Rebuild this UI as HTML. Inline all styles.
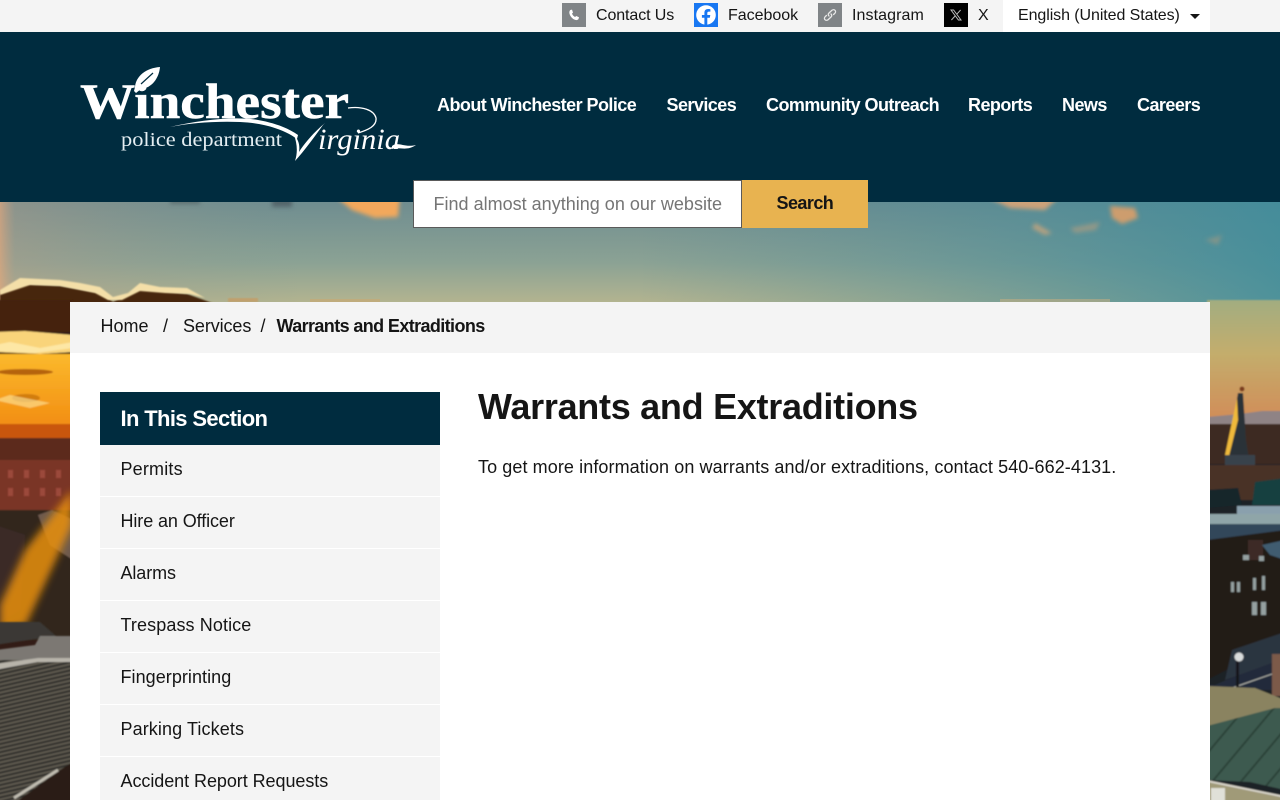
<!DOCTYPE html>
<html lang="en"><head><meta charset="utf-8"><title>Warrants and Extraditions</title>
<style>
*{box-sizing:border-box}
html,body{margin:0;padding:0;width:1280px;height:800px;overflow:hidden;background:#fff;font-family:"Liberation Sans",Arial,sans-serif;color:#151515}
a{color:inherit;text-decoration:none}
.t{position:absolute;white-space:nowrap;line-height:1}
#top{position:absolute;left:0;top:0;width:1280px;height:32px;background:#f4f4f4}
.ic{position:absolute;top:3px;width:24px;height:24px;display:block}
#lang{position:absolute;left:1003px;top:0;width:207px;height:32px;background:#fff}
#hdr{position:absolute;left:0;top:32px;width:1280px;height:170px;background:#002c3f}
#bg{position:absolute;left:0;top:202px}
.nav{font-weight:bold;font-size:18px;color:#fff;top:96px;letter-spacing:-.55px}
#inp{position:absolute;left:413px;top:180px;width:329px;height:48px;background:#fff;border:1px solid #5a5a5a}
#btn{position:absolute;left:742px;top:180px;width:126px;height:48px;background:#e8b350}
#main{position:absolute;left:70px;top:302px;width:1140px;height:498px;background:#fff}
#crumb{position:absolute;left:70px;top:302px;width:1140px;height:51px;background:#f4f4f4}
#shead{position:absolute;left:100px;top:392px;width:340px;height:53px;background:#002c3f}
.li{position:absolute;left:100px;width:340px;height:51px;background:#f4f4f4}
.tb{top:8px;font-size:16px}
.m{font-size:18px;left:120.5px}
</style></head><body>

<svg id="bg" width="1280" height="598" viewBox="0 202 1280 598" xmlns="http://www.w3.org/2000/svg">
<defs>
<linearGradient id="sky" x1="0" y1="0" x2="0" y2="1"><stop offset="0" stop-color="#6f8d90"/><stop offset=".55" stop-color="#8ba294"/><stop offset="1" stop-color="#bcb88f"/></linearGradient>
<linearGradient id="skyR" x1="0" y1="0" x2="1" y2="0"><stop offset="0" stop-color="#4f8a96" stop-opacity="0"/><stop offset="1" stop-color="#3d8c9c" stop-opacity=".85"/></linearGradient>
<linearGradient id="skyL" x1="0" y1="0" x2="1" y2="0"><stop offset="0" stop-color="#e0a67c" stop-opacity=".75"/><stop offset=".05" stop-color="#b59c86" stop-opacity=".4"/><stop offset="1" stop-color="#8a9a8f" stop-opacity="0"/></linearGradient>
<linearGradient id="rs" x1="0" y1="0" x2="0" y2="1"><stop offset="0" stop-color="#a2ad80"/><stop offset=".45" stop-color="#c3ad6c"/><stop offset="1" stop-color="#d18d58"/></linearGradient>
<linearGradient id="ls" x1="0" y1="0" x2="0" y2="1"><stop offset="0" stop-color="#fbb92c"/><stop offset="1" stop-color="#f28d12"/></linearGradient>
<pattern id="roof" width="4" height="4" patternUnits="userSpaceOnUse" patternTransform="rotate(-13)"><rect width="4" height="4" fill="#5f5a50"/><rect width="4" height="2" fill="#2f2d2a"/></pattern>
<pattern id="roofG" width="22" height="22" patternUnits="userSpaceOnUse" patternTransform="rotate(40)"><rect width="22" height="22" fill="#3d5a4f"/><rect width="2" height="22" fill="#2b4239"/></pattern>
<filter id="b0" x="-10%" y="-10%" width="120%" height="120%"><feGaussianBlur stdDeviation=".8"/></filter>
<filter id="b1" x="-20%" y="-50%" width="140%" height="200%"><feGaussianBlur stdDeviation="2"/></filter>
<filter id="b3" x="-50%" y="-50%" width="200%" height="200%"><feGaussianBlur stdDeviation="4"/></filter>
</defs>
<rect x="0" y="202" width="1280" height="110" fill="url(#sky)"/>
<rect x="640" y="202" width="640" height="110" fill="url(#skyR)"/>
<rect x="0" y="202" width="300" height="110" fill="url(#skyL)"/>
<g filter="url(#b1)">
<path d="M335 196 L400 196 L398 217 L375 218 L352 210Z" fill="#f2a85c"/>
<path d="M985 196 L1060 196 L1045 210 L1010 208Z" fill="#e8a873" opacity=".8"/>
<path d="M1110 206 L1135 208 L1138 218 L1122 224 L1112 218Z" fill="#e3a066" opacity=".85"/>
<path d="M1035 223 L1052 233 L1045 235 L1032 228Z" fill="#dca878" opacity=".7"/>
<path d="M1070 228 L1100 222 L1096 230 L1075 233Z" fill="#c8a07a" opacity=".5"/>
<path d="M1205 240 L1222 235 L1218 245Z" fill="#b09a7c" opacity=".5"/>
<rect x="170" y="196" width="30" height="8" fill="#4c5a5e" opacity=".6"/>
<rect x="272" y="196" width="20" height="11" fill="#4e5c62" opacity=".8"/>
</g>
<!-- left horizon cloud band -->
<path d="M0 294 L20 284 L60 286 L100 293 L113 302 L140 289 L187 294 L215 304 L0 320Z" fill="#47280f" filter="url(#b0)"/>
<path d="M0 290 L20 278 L40 279 L60 280 L80 283 L100 287 L113 297 L128 293 L140 283 L160 287 L187 288 L205 298 L190 294 L165 293 L140 291 L122 300 L108 300 L95 293 L60 286 L30 285 L0 295Z" fill="#f4dfa8" filter="url(#b0)"/>
<rect x="228" y="298" width="30" height="4" fill="#c89a5e" opacity=".7" filter="url(#b0)"/>
<rect x="310" y="299" width="70" height="3" fill="#caa672" opacity=".6"/>
<rect x="1000" y="299" width="110" height="3" fill="#ccb07f" opacity=".5"/>
<!-- left strip -->
<g filter="url(#b0)">
<rect x="-5" y="302" width="78" height="498" fill="#321d12"/>
<rect x="-5" y="300" width="78" height="32" fill="#44240f"/>
<rect x="-5" y="354" width="78" height="72" fill="url(#ls)"/>
<path d="M-5 332 L25 331 L73 335 L73 352 L40 354 L-5 352Z" fill="#f9d47a"/>
<path d="M-5 345 L10 342 L40 348 L73 342 L73 348 L35 353 L-5 351Z" fill="#fff0b8" opacity=".7"/>
<ellipse cx="25" cy="372" rx="28" ry="3" fill="#b5630c"/>
<ellipse cx="26" cy="398" rx="14" ry="4" fill="#d27d10"/>
<path d="M-5 400 L30 408 L50 403 L10 395Z" fill="#fde7a0" opacity=".6"/>
<rect x="-5" y="424" width="78" height="14" fill="#c9560f"/>
<rect x="-5" y="438" width="78" height="22" fill="#5c2a1b"/>
<rect x="-5" y="460" width="78" height="50" fill="#7a3528"/>
<g fill="#a45040" opacity=".8"><rect x="8" y="470" width="5" height="8"/><rect x="24" y="470" width="5" height="8"/><rect x="40" y="470" width="5" height="8"/><rect x="56" y="470" width="5" height="8"/><rect x="8" y="488" width="5" height="8"/><rect x="24" y="488" width="5" height="8"/><rect x="40" y="488" width="5" height="8"/><rect x="56" y="488" width="5" height="8"/></g>
<rect x="-5" y="510" width="78" height="130" fill="#33251f"/>
<path d="M38 515 L52 510 L73 520 L73 560 L50 545 Z" fill="#6e5a4e"/>
<path d="M-5 525 L25 535 L20 610 L-5 625Z" fill="#3a2c26"/>
</g>
<path d="M72 490 L72 525 L26 625 L0 632 L0 605 L25 550Z" fill="#e8900f" opacity=".85" filter="url(#b3)"/>
<g filter="url(#b0)">
<path d="M-5 622 L40 622 L56 636 L-5 645Z" fill="#3a3934"/>
<path d="M-5 650 L35 645 L40 636 L73 636 L73 658 L-5 668Z" fill="#7b7873"/>
<rect x="-5" y="660" width="78" height="145" fill="url(#roof)"/>
<path d="M-5 664 L38 658 L73 658 L73 662 L38 662 L-5 670Z" fill="#b8b4aa"/>
<path d="M12 805 L60 770 L73 762 L73 805Z" fill="#2a1f18"/>
<path d="M14 798 L58 770" stroke="#c0bcb0" stroke-width="3" fill="none"/>
</g>
<!-- right strip -->
<g filter="url(#b0)">
<rect x="1207" y="302" width="78" height="503" fill="#1e2226"/>
<rect x="1207" y="300" width="78" height="118" fill="url(#rs)"/>
<path d="M1207 417 L1240 414 L1262 411 L1285 411 L1285 425 L1207 425Z" fill="#8f8385"/>
<rect x="1207" y="424" width="78" height="40" fill="#3e2b22"/>
<path d="M1226 460 L1238 393 L1243 393 L1246 440 L1250 465Z" fill="#2a3038"/>
<path d="M1225 455 L1237 398 L1238 420 L1229 456Z" fill="#efb93a"/>
<circle cx="1242" cy="389" r="2.5" fill="#7a3a1a"/>
<rect x="1225" y="455" width="30" height="12" fill="#39434c"/>
<rect x="1207" y="465" width="78" height="35" fill="#4a3026"/>
<path d="M1207 490 L1238 488 L1242 505 L1207 508Z" fill="#14252b"/>
<path d="M1255 482 L1285 478 L1285 505 L1252 505Z" fill="#143f40"/>
<rect x="1237" y="506" width="48" height="10" fill="#8aa0ad"/>
<rect x="1207" y="514" width="78" height="10" fill="#8fa5a8"/>
<path d="M1207 524 L1285 524 L1285 532 L1250 537 L1207 540Z" fill="#33475a"/>
<path d="M1207 540 L1285 530 L1285 640 L1207 680Z" fill="#221a19"/>
<rect x="1248" y="540" width="15" height="20" fill="#3e2b26"/>
<path d="M1262 545 L1285 540 L1285 560 L1270 555Z" fill="#3f5c70"/>
<g fill="#95a0a0"><rect x="1243" y="555" width="6" height="5"/><rect x="1259" y="556" width="5" height="5"/><rect x="1253" y="578" width="3" height="12"/><rect x="1262" y="576" width="3" height="14"/><rect x="1231" y="582" width="3" height="10"/><rect x="1237" y="582" width="3" height="10"/><rect x="1252" y="602" width="5" height="13"/><rect x="1261" y="602" width="5" height="13"/></g>
<path d="M1215 685 L1285 655 L1285 685 L1272 688 L1272 690 L1207 690 L1207 685Z" fill="#232c3a"/>
<path d="M1232 650 L1285 632 L1285 658 L1225 680Z" fill="#2c3440"/>
<path d="M1232 688 L1275 673" stroke="#b8b8b0" stroke-width="1" fill="none"/>
<rect x="1236" y="660" width="3" height="28" fill="#15181c"/>
<circle cx="1239" cy="657" r="4.5" fill="#d9dcdc"/>
<rect x="1272" y="654" width="13" height="42" fill="#7c5a49"/>
<path d="M1207 686 L1255 688 L1285 700 L1285 710 L1207 726Z" fill="#8a8360"/>
<path d="M1207 726 L1275 708 L1285 708 L1285 790 L1250 782 L1207 780Z" fill="url(#roofG)"/>
<path d="M1207 782 L1285 798 L1285 805 L1207 805Z" fill="#a09a78"/>
<path d="M1207 781 L1285 797" stroke="#dcd8cc" stroke-width="2"/>
<rect x="1211" y="788" width="14" height="14" fill="#e0e0d8"/>
</g>
</svg>

<div id="top">
<svg class="ic" style="left:562px" viewBox="0 0 24 24"><rect width="24" height="24" fill="#808487"/><path d="M8.3 7 L10 6.6 L11 9.6 L10 10.6 C10.5 12 11.7 13.3 13.1 14 L14.2 13 L17 14.3 L16.5 16 C15.9 17 14.6 17.3 13.3 16.9 C10.4 15.9 8.3 13.5 7.5 10.7 C7.1 9.2 7.4 7.9 8.3 7Z" fill="#fff"/></svg>
<a class="t tb" style="left:596px;letter-spacing:-.1px">Contact Us</a>
<svg class="ic" style="left:694px" viewBox="0 0 24 24"><rect width="24" height="24" fill="#1877f2"/><circle cx="12" cy="12" r="9.8" fill="#fff"/><path d="M13.3 22 V14.8 H15.8 L16.3 12 H13.3 V10.2 C13.3 9.2 13.8 8.6 14.9 8.6 H16.4 V6.2 C15.6 6 14.8 6 14 6 C11.8 6 10.4 7.4 10.4 9.8 V12 H7.9 V14.8 H10.4 V22Z" fill="#1877f2"/></svg>
<a class="t tb" style="left:728px;letter-spacing:-.02px">Facebook</a>
<svg class="ic" style="left:818px" viewBox="0 0 24 24"><rect width="24" height="24" fill="#808487"/><g fill="none" stroke="#e8e8e8" stroke-width="1.3" stroke-linecap="round"><path d="M11 13 C10 12 10.2 10.8 11 10 L13.8 7.4 C14.8 6.5 16.2 6.5 17 7.3 C17.8 8.1 17.7 9.4 16.9 10.2 L15.6 11.5"/><path d="M13 11 C14 12 13.8 13.2 13 14 L10.2 16.6 C9.2 17.5 7.8 17.5 7 16.7 C6.2 15.9 6.3 14.6 7.1 13.8 L8.4 12.5"/></g></svg>
<a class="t tb" style="left:852px;letter-spacing:.09px">Instagram</a>
<svg class="ic" style="left:944px" viewBox="0 0 24 24"><rect width="24" height="24" fill="#000"/><path d="M7 7 H9.6 L17 17 H14.4Z" fill="none" stroke="#bbb" stroke-width="1"/><path d="M16.6 7 L12.8 11.2 M11.2 12.9 L7.4 17" stroke="#bbb" stroke-width="1"/></svg>
<a class="t tb" style="left:978px">X</a>
<div id="lang"></div>
<span class="t tb" style="left:1018px;letter-spacing:-.08px">English (United States)</span>
<svg style="position:absolute;left:1190px;top:14px" width="10" height="5" viewBox="0 0 10 5"><path d="M0 0H10L5 5Z" fill="#151515"/></svg>
</div>

<div id="hdr"></div>

<svg style="position:absolute;left:70px;top:55px" width="360" height="120" viewBox="70 55 360 120" xmlns="http://www.w3.org/2000/svg">
<text x="80" y="118" font-family="'Liberation Serif',serif" font-weight="bold" font-size="50" fill="#fff" stroke="#fff" stroke-width=".5" textLength="269" lengthAdjust="spacingAndGlyphs">Winchester</text>
<path d="M135 87 C136 76 146 68 160 67 C159 78 152 88 141 89 L136 93 L134 91Z" fill="#fff"/>
<path d="M141 84 L153 73" stroke="#002c3f" stroke-width="1.2" fill="none"/>
<text x="121" y="146" font-family="'Liberation Serif',serif" font-size="20" fill="#e4eef2" textLength="161" lengthAdjust="spacingAndGlyphs">police department</text>
<path d="M170 127 C200 120 235 116 258 120 C275 123 288 128 298 135 L297 139 C285 130 265 123 240 122 C215 121 190 123 170 127Z" fill="#fff"/>
<path d="M348 108 C362 106 374 110 376 118 C377 126 368 130 358 133" fill="none" stroke="#fff" stroke-width="1.3"/>
<path d="M294 135 C297 143 298 152 295 161 C305 150 315 136 323 125 L325 123 C313 133 304 144 299 152 C300 146 299 140 294 135Z" fill="#fff"/>
<text x="318" y="149" font-family="'Liberation Serif',serif" font-style="italic" font-size="30" fill="#fff" textLength="82" lengthAdjust="spacingAndGlyphs">irginia</text>
<path d="M392 146 C398 141 404 148 416 145 C406 152 398 146 392 149Z" fill="#fff"/>
</svg>

<a class="t nav" style="left:437px">About Winchester Police</a>
<a class="t nav" style="left:666.5px">Services</a>
<a class="t nav" style="left:766px">Community Outreach</a>
<a class="t nav" style="left:968px">Reports</a>
<a class="t nav" style="left:1062px">News</a>
<a class="t nav" style="left:1137px">Careers</a>

<div id="inp"></div>
<span class="t" style="left:433.5px;top:194.5px;font-size:18px;color:#757575;letter-spacing:.01px">Find almost anything on our website</span>
<div id="btn"></div>
<span class="t" style="left:776.5px;top:194px;font-size:18px;font-weight:bold;color:#151515;letter-spacing:-.55px">Search</span>

<div id="main"></div>
<div id="crumb"></div>
<a class="t" style="left:100.5px;top:317px;font-size:18px;letter-spacing:0">Home</a>
<span class="t" style="left:163px;top:317px;font-size:18px">/</span>
<a class="t" style="left:183px;top:317px;font-size:18px;letter-spacing:-.1px">Services</a>
<span class="t" style="left:260.5px;top:317px;font-size:18px">/</span>
<span class="t" style="left:276.5px;top:317px;font-size:18px;font-weight:bold;letter-spacing:-.61px">Warrants and Extraditions</span>

<div id="shead"></div>
<span class="t" style="left:120.5px;top:407.5px;font-size:22px;font-weight:bold;color:#fff;letter-spacing:-.64px">In This Section</span>
<div class="li" style="top:445px"></div><a class="t m" style="top:460px;letter-spacing:.18px">Permits</a>
<div class="li" style="top:497px"></div><a class="t m" style="top:512px;letter-spacing:-.1px">Hire an Officer</a>
<div class="li" style="top:549px"></div><a class="t m" style="top:564px;letter-spacing:-.1px">Alarms</a>
<div class="li" style="top:601px"></div><a class="t m" style="top:616px;letter-spacing:.1px">Trespass Notice</a>
<div class="li" style="top:653px"></div><a class="t m" style="top:668px;letter-spacing:.05px">Fingerprinting</a>
<div class="li" style="top:705px"></div><a class="t m" style="top:720px;letter-spacing:.1px">Parking Tickets</a>
<div class="li" style="top:757px;height:43px"></div><a class="t m" style="top:772px;letter-spacing:-.06px">Accident Report Requests</a>

<h1 class="t" style="left:478px;top:389px;margin:0;font-size:36px;font-weight:bold;letter-spacing:-.28px">Warrants and Extraditions</h1>
<p class="t" style="left:478px;top:458px;margin:0;font-size:18px;letter-spacing:.09px">To get more information on warrants and/or extraditions, contact 540-662-4131.</p>
</body></html>
